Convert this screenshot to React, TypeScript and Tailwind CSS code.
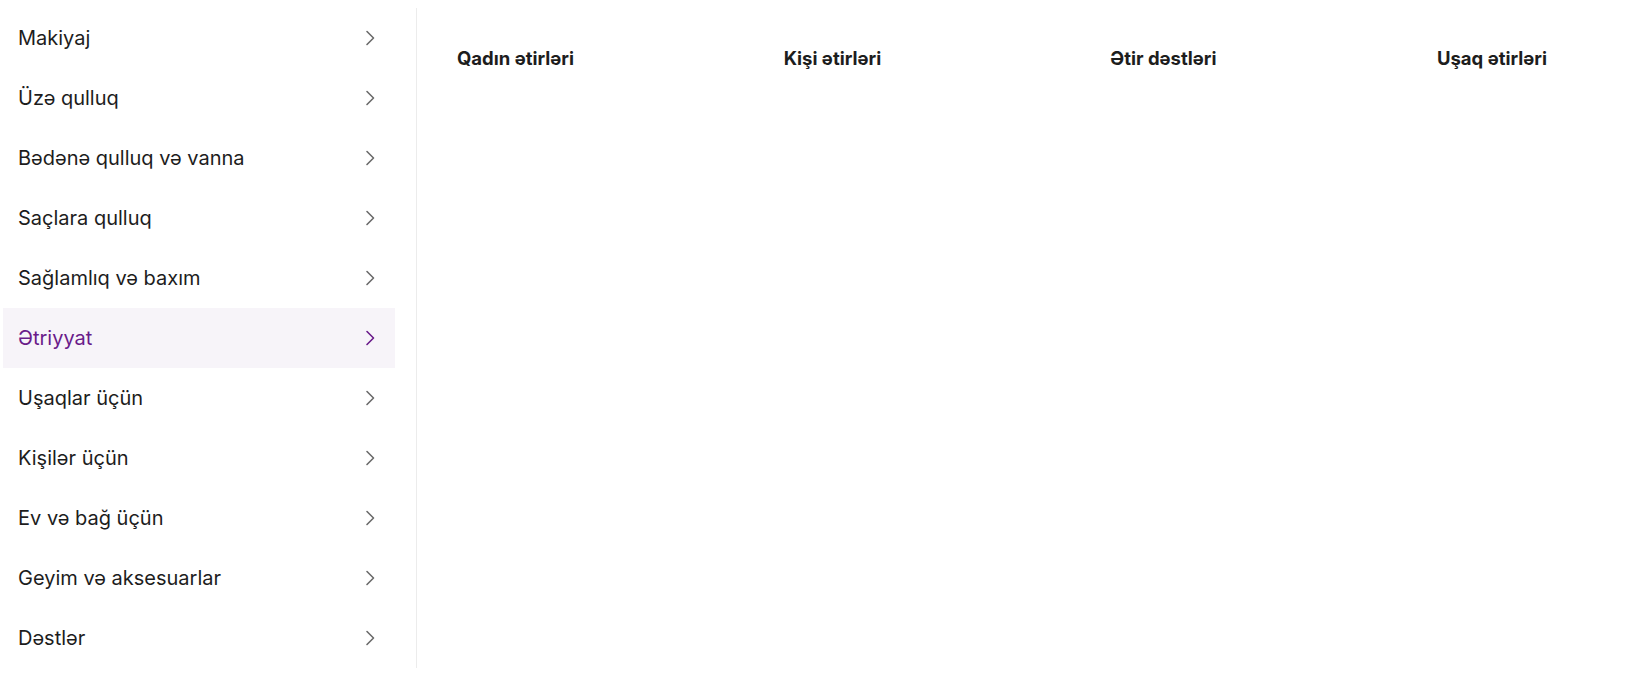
import React, { FC } from "react";

const categories: string[] = [
	"Makiyaj",
	"Üzə qulluq",
	"Bədənə qulluq və vanna",
	"Saçlara qulluq",
	"Sağlamlıq və baxım",
	"Ətriyyat",
	"Uşaqlar üçün",
	"Kişilər üçün",
	"Ev və bağ üçün",
	"Geyim və aksesuarlar",
	"Dəstlər",
];

const subCategories: string[] = ["Qadın ətirləri", "Kişi ətirləri", "Ətir dəstləri", "Uşaq ətirləri"];

const Chevron: FC<{ active?: boolean }> = ({ active }) => (
	<svg width="10" height="16" viewBox="0 0 10 16" fill="none">
		<path
			d="M2 1.5L8.5 8L2 14.5"
			stroke={active ? "#6a1b8a" : "#6b6b6b"}
			strokeWidth="1.6"
			strokeLinecap="round"
			strokeLinejoin="round"
		/>
	</svg>
);

const App: FC = () => {
	const activeIndex = 5;

	return (
		<div className="w-[1635px] h-[679px] bg-white overflow-hidden font-['Inter',sans-serif]">
			<div className="flex pt-2">
				<nav className="w-[417px] shrink-0 pl-[3px] pr-[21px] border-r border-[#ececec] h-[660px]">
					<ul>
						{categories.map((name, i) => (
							<li key={name}>
								<div
									className={`flex items-center justify-between h-[60px] pl-[15px] pr-[20px] cursor-pointer ${
										i === activeIndex ? "bg-[#f7f4f9] text-[#6a1b8a]" : "text-[#1d1d1d]"
									}`}
								>
									<span className="text-[20px] leading-none">{name}</span>
									<Chevron active={i === activeIndex} />
								</div>
							</li>
						))}
					</ul>
				</nav>
				<section className="flex-1 pl-[40px] pt-[39px]">
					<div className="grid grid-cols-[repeat(4,326.67px)]">
						{subCategories.map((name) => (
							<a key={name} className="text-[18.5px] leading-[22px] font-bold text-[#1d1d1d] cursor-pointer whitespace-nowrap">
								{name}
							</a>
						))}
					</div>
				</section>
			</div>
		</div>
	);
};

export default App;
